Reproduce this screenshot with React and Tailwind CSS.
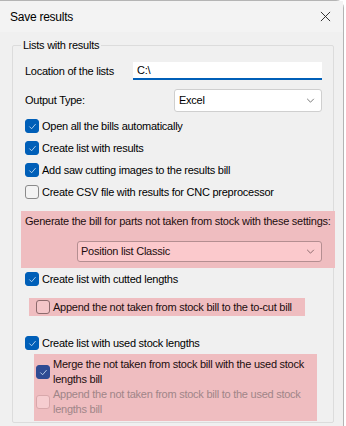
import React from "react";

const font = {
  fontFamily: '"Liberation Sans", Arial, sans-serif',
  letterSpacing: "-0.25px",
};

function Check({ checked, tone = "normal" }) {
  // Windows 11 style check box
  const box =
    tone === "pink-checked"
      ? "bg-[#2f4b93] border-[#2f4b93]"
      : tone === "pink-disabled"
      ? "bg-[#f6cdd0] border-[#d8a8ab]"
      : tone === "pink"
      ? "bg-[#f3c6c9] border-[#8c6a6d]"
      : checked
      ? "bg-[#005fb8] border-[#005fb8]"
      : "bg-[#f3f3f3] border-[#8a8a8a]";
  return (
    <span
      className={`flex h-[14px] w-[14px] shrink-0 items-center justify-center rounded-[3px] border ${box}`}
    >
      {checked && (
        <svg viewBox="0 0 12 12" className="h-[9px] w-[9px]" fill="none">
          <path
            d="M2.2 6.4 4.8 9 9.8 3.2"
            stroke="#cfe3f7"
            strokeWidth="1.1"
            strokeLinecap="round"
            strokeLinejoin="round"
          />
        </svg>
      )}
    </span>
  );
}

function Chevron({ color = "#5f5f5f" }) {
  return (
    <svg viewBox="0 0 10 6" className="h-[5px] w-[9px]" fill="none">
      <path d="M1 1l4 4 4-4" stroke={color} strokeWidth="1" />
    </svg>
  );
}

function CheckRow({ checked, children }) {
  return (
    <div className="flex h-[22px] items-center gap-[3px] whitespace-nowrap pl-[12px]">
      <Check checked={checked} />
      <span>{children}</span>
    </div>
  );
}

export default function App() {
  return (
    <div
      className="h-[426px] w-[346px] overflow-hidden bg-white text-[11px] text-black"
      style={font}
    >
      <div className="h-full w-[344px] rounded-tr-[8px] border-t border-r border-[#b4b4b4] bg-[#f0f0f0]">
        {/* title bar */}
        <div className="flex h-[31px] items-center justify-between bg-[#f3f3f3] pl-[10px] pr-[12px] text-[12px]">
          <span>Save results</span>
          <svg viewBox="0 0 12 12" className="h-[11px] w-[11px]" fill="none">
            <path d="M1 1l10 10M11 1L1 11" stroke="#222" strokeWidth="1" />
          </svg>
        </div>

        <div className="pl-[12px] pr-[9px] pt-[6px]">
          <fieldset className="h-[385px] rounded-[2px] border border-[#dcdcdc] px-0 pb-0">
            <legend className="ml-[8px] px-[2px] leading-[14px]">
              Lists with results
            </legend>

            {/* location */}
            <div className="mt-[10px] flex h-[18px] items-center pl-[12px] pr-[11px]">
              <span className="w-[108px]">Location of the lists</span>
              <div className="flex h-[18px] flex-1 items-center border-b-2 border-[#005fb8] bg-white pl-[4px]">
                C:\
              </div>
            </div>

            {/* output type */}
            <div className="mt-[9px] flex h-[23px] items-center pl-[12px] pr-[11px]">
              <span className="w-[149px]">Output Type:</span>
              <div className="flex h-[23px] flex-1 items-center justify-between rounded-[3px] border border-[#cfcfcf] bg-white pl-[4px] pr-[6px]">
                <span>Excel</span>
                <Chevron />
              </div>
            </div>

            <div className="mt-[3px]">
              <CheckRow checked>Open all the bills automatically</CheckRow>
              <CheckRow checked>Create list with results</CheckRow>
              <CheckRow checked>Add saw cutting images to the results bill</CheckRow>
              <CheckRow>Create CSV file with results for CNC preprocessor</CheckRow>
            </div>

            {/* not taken from stock settings */}
            <div className="mr-[-2px] ml-[8px] mt-[8px] h-[57px] bg-[#efbdc0] pt-[3px] text-[#1d0d0e]">
              <div className="whitespace-nowrap pl-[4px] leading-[14px]">
                Generate the bill for parts not taken from stock with these settings:
              </div>
              <div className="ml-[56px] mr-[13px] mt-[13px] flex h-[21px] items-center justify-between rounded-[3px] border border-[#b48e91] bg-[#fbc9cc] pl-[3px] pr-[6px]">
                <span>Position list Classic</span>
                <Chevron color="#7a5a5d" />
              </div>
            </div>

            <CheckRow checked>Create list with cutted lengths</CheckRow>

            <div className="ml-[16px] mt-[8px] flex h-[18px] w-[276px] items-center gap-[3px] whitespace-nowrap bg-[#efbdc0] pl-[7px] text-[#1d0d0e]">
              <Check tone="pink" />
              <span>Append the not taken from stock bill to the to-cut bill</span>
            </div>

            <div className="mt-[16px]">
              <CheckRow checked>Create list with used stock lengths</CheckRow>
            </div>

            <div className="ml-[21px] w-[283px] whitespace-nowrap bg-[#efbdc0] pb-[4px] pl-[2px] pt-[3px] leading-[15px] text-[#1d0d0e]">
              <div className="flex items-center gap-[3px]">
                <Check checked tone="pink-checked" />
                <span>
                  Merge the not taken from stock bill with the used stock
                  <br />
                  lengths bill
                </span>
              </div>
              <div className="flex items-center gap-[3px] text-[#a08588]">
                <Check tone="pink-disabled" />
                <span>
                  Append the not taken from stock bill to the used stock
                  <br />
                  lengths bill
                </span>
              </div>
            </div>
          </fieldset>
        </div>
      </div>
    </div>
  );
}
